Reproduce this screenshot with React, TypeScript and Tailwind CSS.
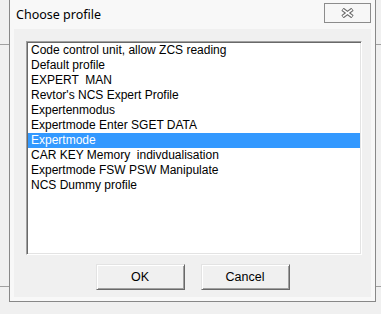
import React from 'react';

const profiles = [
  'Code control unit, allow ZCS reading',
  'Default profile',
  'EXPERT  MAN',
  "Revtor's NCS Expert Profile",
  'Expertenmodus',
  'Expertmode Enter SGET DATA',
  'Expertmode',
  'CAR KEY Memory  indivdualisation',
  'Expertmode FSW PSW Manipulate',
  'NCS Dummy profile',
];

function CloseGlyph() {
  return (
    <svg width="13" height="10" viewBox="0 0 13 10">
      <g strokeLinecap="butt">
        <line x1="1.5" y1="1.2" x2="11.5" y2="8.8" stroke="#6b6b6b" strokeWidth="3.8" />
        <line x1="11.5" y1="1.2" x2="1.5" y2="8.8" stroke="#6b6b6b" strokeWidth="3.8" />
        <line x1="2" y1="1.6" x2="11" y2="8.4" stroke="#ffffff" strokeWidth="1.6" />
        <line x1="11" y1="1.6" x2="2" y2="8.4" stroke="#ffffff" strokeWidth="1.6" />
      </g>
    </svg>
  );
}

function DlgButton({ label }: { label: string }) {
  return (
    <button className="flex h-[26px] w-[89px] items-center justify-center border border-t-[#e3e3e3] border-l-[#e3e3e3] border-b-[#696969] border-r-[#696969] bg-[#f0f0f0] text-[12.5px] text-black shadow-[inset_1px_1px_0_#ffffff,inset_-1px_-1px_0_#a0a0a0]">
      {label}
    </button>
  );
}

export default function App() {
  const selected = 6;

  return (
    <div
      className="relative h-[314px] w-[381px] overflow-hidden bg-[#f0f0f0]"
      style={{ fontFamily: '"Liberation Sans", Arial, sans-serif' }}
    >
      {/* window edges behind the dialog */}
      <div className="absolute left-0 top-[44px] h-px w-full bg-[#a0a0a0]" />
      <div className="absolute left-0 top-[286px] h-px w-full bg-[#a0a0a0]" />

      {/* Dialog */}
      <div className="relative ml-[9px] flex h-[302px] w-[367px] flex-col border-x border-b border-[#888888] bg-[#f8f8f8] px-[4px] pb-[4px]">
        {/* Title bar */}
        <div className="flex h-[29px] items-start justify-between">
          <span
            className="pl-[2px] pt-[7px] text-[12.5px] leading-[16px] text-black"
            style={{ fontFamily: '"Noto Sans", sans-serif' }}
          >
            Choose profile
          </span>
          <div className="mt-[3px] flex h-[20px] w-[47px] items-center justify-center border border-[#8c8c8c] bg-[#f7f7f7]">
            <CloseGlyph />
          </div>
        </div>

        {/* Client area */}
        <div className="flex flex-1 flex-col bg-[#f0f0f0] pt-[12px]">
          <div className="ml-[12px] h-[214px] w-[336px] border border-t-[#a0a0a0] border-l-[#a0a0a0] border-b-[#ffffff] border-r-[#ffffff] shadow-[inset_1px_1px_0_#696969,inset_-1px_-1px_0_#e3e3e3] bg-white p-[1px]">
            <ul className="flex flex-col">
              {profiles.map((p, i) => (
                <li
                  key={p}
                  className={
                    i === selected
                      ? 'h-[15px] whitespace-pre bg-[#3399ff] pl-[3px] text-[12px] leading-[15px] text-white'
                      : 'h-[15px] whitespace-pre pl-[3px] text-[12px] leading-[15px] text-black'
                  }
                >
                  {p}
                </li>
              ))}
            </ul>
          </div>

          <div className="mt-[9px] flex justify-center gap-[16px]">
            <DlgButton label="OK" />
            <DlgButton label="Cancel" />
          </div>
        </div>
      </div>
    </div>
  );
}
